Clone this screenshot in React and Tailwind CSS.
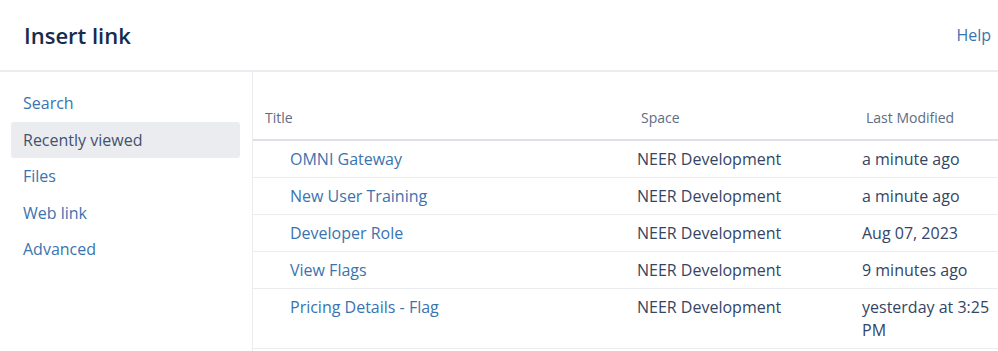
import React from "react";

const navItems = ["Search", "Recently viewed", "Files", "Web link", "Advanced"];

const rows = [
  { title: "OMNI Gateway", space: "NEER Development", modified: "a minute ago" },
  { title: "New User Training", space: "NEER Development", modified: "a minute ago" },
  { title: "Developer Role", space: "NEER Development", modified: "Aug 07, 2023" },
  { title: "View Flags", space: "NEER Development", modified: "9 minutes ago" },
  { title: "Pricing Details - Flag", space: "NEER Development", modified: "yesterday at 3:25 PM" },
];

const App = () => {
  const active = "Recently viewed";

  return (
    <div
      className="w-[998px] h-[351px] overflow-hidden bg-white text-[#172b4d]"
      style={{ fontFamily: '"Open Sans", "Noto Sans", sans-serif' }}
    >
      {/* Header */}
      <div className="h-[72px] flex items-center justify-between pl-6 pr-[7px] border-b-2 border-[#ebecf0]">
        <h2 className="text-[22px] font-semibold text-[#172b4d] leading-none">Insert link</h2>
        <a className="text-[16px] text-[#3b73af]">Help</a>
      </div>

      <div className="flex h-[279px]">
        {/* Sidebar */}
        <div className="w-[253px] shrink-0 border-r border-[#ebecf0] pl-[11px] pr-3 pt-[13px]">
          {navItems.map((item) => (
            <div
              key={item}
              className={`h-[36.5px] flex items-center px-3 rounded-[3px] text-[16px] ${
                item === active ? "bg-[#ebecf0] text-[#42526e]" : "text-[#3b73af]"
              }`}
            >
              {item}
            </div>
          ))}
        </div>

        {/* Table */}
        <div className="flex-1">
          <div className="flex pt-[37px] pb-[12px] leading-[18px] border-b-2 border-[#dfe1e6] text-[14px] text-[#5e6c84] font-medium">
            <div className="w-[388px] pl-3">Title</div>
            <div className="w-[225px]">Space</div>
            <div className="flex-1">Last Modified</div>
          </div>
          {rows.map((row) => (
            <div
              key={row.title}
              className="flex items-start border-b border-[#ebecf0] text-[16px] leading-[23px] pt-[7px] pb-[6px]"
            >
              <div className="w-[384px] pl-[37px] text-[#3b73af]">{row.title}</div>
              <div className="w-[225px] text-[#344563]">{row.space}</div>
              <div className="flex-1 pr-2 text-[#344563]">{row.modified}</div>
            </div>
          ))}
        </div>
      </div>
    </div>
  );
};

export default App;
